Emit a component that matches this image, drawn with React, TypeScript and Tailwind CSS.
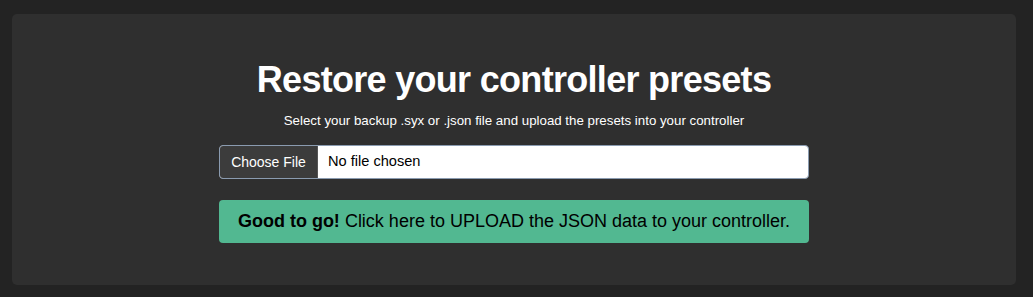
export default function App() {
  return (
    <div className="w-[1033px] h-[297px] bg-[#232323] p-[12px] pt-[14px]" style={{ fontFamily: '"Liberation Sans", Arial, sans-serif' }}>
      <div className="w-[1004px] h-[271px] bg-[#2f2f2f] rounded-[5px] flex flex-col items-center pt-[44px]">
        <h1 className="text-white font-bold text-[36px] leading-[44px] tracking-[-0.7px]">Restore your controller presets</h1>
        <p className="text-white text-[13.3px] leading-[16px] mt-[11px]">Select your backup .syx or .json file and upload the presets into your controller</p>
        <div className="mt-[16px] w-[590px] h-[34px] flex bg-white rounded-[4px] border border-[#8a9bb0] overflow-hidden">
          <div className="w-[98px] h-full bg-[#3c3c3c] text-white text-[14px] flex items-center justify-center border-r border-[#555]">Choose File</div>
          <div className="flex items-center pl-[10px] text-[14.6px] text-black">No file chosen</div>
        </div>
        <div className="mt-[21px] w-[590px] h-[43px] bg-[#52b891] rounded-[4px] flex items-center justify-center text-[18px] text-black">
          <span><b>Good to go!</b> Click here to UPLOAD the JSON data to your controller.</span>
        </div>
      </div>
    </div>
  );
}
